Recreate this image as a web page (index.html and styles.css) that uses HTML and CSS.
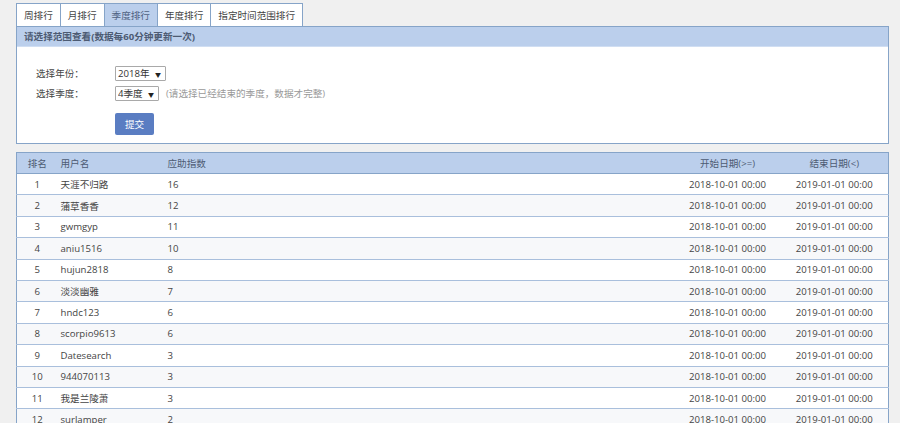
FILE: index.html
```html
<!DOCTYPE html>
<html lang="zh-CN">
<head>
    <meta charset="UTF-8">
    <title>季度排行</title>
    <link rel="stylesheet" href="styles.css">
</head>
<body>
    <ul class="tabs">
        <li class="tab">周排行</li>
        <li class="tab">月排行</li>
        <li class="tab active">季度排行</li>
        <li class="tab">年度排行</li>
        <li class="tab">指定时间范围排行</li>
    </ul>

    <div class="panel">
        <div class="panel-title">请选择范围查看(数据每60分钟更新一次)</div>
        <form class="range-form">
            <div class="form-row">
                <label class="form-label">选择年份：</label>
                <span class="select-wrap">
                    <select class="select">
                        <option>2018年</option>
                    </select>
                </span>
            </div>
            <div class="form-row">
                <label class="form-label">选择季度：</label>
                <span class="select-wrap">
                    <select class="select">
                        <option>4季度</option>
                    </select>
                </span>
                <span class="hint">(请选择已经结束的季度，数据才完整)</span>
            </div>
            <div class="form-row">
                <span class="form-label"></span>
                <button type="submit" class="btn">提交</button>
            </div>
        </form>
    </div>

    <table class="rank-table">
        <colgroup>
            <col class="c-rank">
            <col class="c-user">
            <col>
            <col class="c-start">
            <col class="c-end">
        </colgroup>
        <thead>
            <tr>
                <th class="center">排名</th>
                <th>用户名</th>
                <th>应助指数</th>
                <th class="center">开始日期(>=)</th>
                <th class="center">结束日期(<)</th>
            </tr>
        </thead>
        <tbody>
            <tr><td class="center">1</td><td>天涯不归路</td><td>16</td><td class="center">2018-10-01 00:00</td><td class="center">2019-01-01 00:00</td></tr>
            <tr><td class="center">2</td><td>蒲草香香</td><td>12</td><td class="center">2018-10-01 00:00</td><td class="center">2019-01-01 00:00</td></tr>
            <tr><td class="center">3</td><td>gwmgyp</td><td>11</td><td class="center">2018-10-01 00:00</td><td class="center">2019-01-01 00:00</td></tr>
            <tr><td class="center">4</td><td>aniu1516</td><td>10</td><td class="center">2018-10-01 00:00</td><td class="center">2019-01-01 00:00</td></tr>
            <tr><td class="center">5</td><td>hujun2818</td><td>8</td><td class="center">2018-10-01 00:00</td><td class="center">2019-01-01 00:00</td></tr>
            <tr><td class="center">6</td><td>淡淡幽雅</td><td>7</td><td class="center">2018-10-01 00:00</td><td class="center">2019-01-01 00:00</td></tr>
            <tr><td class="center">7</td><td>hndc123</td><td>6</td><td class="center">2018-10-01 00:00</td><td class="center">2019-01-01 00:00</td></tr>
            <tr><td class="center">8</td><td>scorpio9613</td><td>6</td><td class="center">2018-10-01 00:00</td><td class="center">2019-01-01 00:00</td></tr>
            <tr><td class="center">9</td><td>Datesearch</td><td>3</td><td class="center">2018-10-01 00:00</td><td class="center">2019-01-01 00:00</td></tr>
            <tr><td class="center">10</td><td>944070113</td><td>3</td><td class="center">2018-10-01 00:00</td><td class="center">2019-01-01 00:00</td></tr>
            <tr><td class="center">11</td><td>我是兰陵萧</td><td>3</td><td class="center">2018-10-01 00:00</td><td class="center">2019-01-01 00:00</td></tr>
            <tr><td class="center">12</td><td>surlamper</td><td>2</td><td class="center">2018-10-01 00:00</td><td class="center">2019-01-01 00:00</td></tr>
        </tbody>
    </table>
</body>
</html>
```

FILE: styles.css
```css
:root {
    --page-bg: #f0f0f0;
    --bar-bg: #bbcfec;
    --border: #86a4c8;
    --row-line: #a9bfdc;
    --text: #444;
    --head-text: #4d5b73;
}

* {
    box-sizing: border-box;
    margin: 0;
    padding: 0;
}

body {
    background-color: var(--page-bg);
    padding: 3px 11px 0 16px;
    font-family: "Open Sans", "Noto Sans CJK SC", sans-serif;
    font-size: 9.6px;
    color: var(--text);
}

/* tabs */
.tabs {
    list-style: none;
    display: flex;
    height: 23px;
}

.tab {
    display: flex;
    align-items: center;
    padding: 0 7px;
    border: 1px solid var(--border);
    border-bottom: none;
    border-left: none;
    background-color: #fff;
    color: #444;
}

.tab:first-child {
    border-left: 1px solid var(--border);
}

.tab.active {
    background-color: var(--bar-bg);
    color: #4f6282;
}

/* search panel */
.panel {
    background-color: #fff;
    border: 1px solid var(--border);
    height: 118px;
}

.panel-title {
    background-color: var(--bar-bg);
    height: 20px;
    line-height: 20px;
    padding-left: 7px;
    font-weight: 700;
    color: #4d5b73;
    border-bottom: 1px solid #d0def2;
}

.range-form {
    padding: 16px 0 0 19px;
}

.form-row {
    display: flex;
    align-items: center;
    height: 20px;
}

.form-label {
    width: 79px;
    color: #444;
}

.select-wrap {
    position: relative;
    display: inline-block;
}

.select-wrap::after {
    content: "▼";
    position: absolute;
    right: 5px;
    top: 4px;
    font-size: 6px;
    color: #222;
    pointer-events: none;
}

.select {
    appearance: none;
    -webkit-appearance: none;
    font: inherit;
    color: #333;
    background: #fff;
    border: 1px solid #a9a9a9;
    border-radius: 1px;
    height: 15px;
    padding: 0 15px 0 2px;
}

.hint {
    margin-left: 7px;
    color: #999;
}

.btn {
    margin-top: 21px;
    width: 39px;
    height: 22px;
    border: none;
    border-radius: 2px;
    background-color: #5a7dc2;
    color: #fff;
    font: inherit;
    cursor: pointer;
}

/* ranking table */
.rank-table {
    margin-top: 8px;
    width: 100%;
    table-layout: fixed;
    border-collapse: collapse;
    border: 1px solid var(--border);
    background-color: #fff;
}

.c-rank { width: 41px; }
.c-user { width: 107px; }
.c-start { width: 106px; }
.c-end { width: 108px; }

.rank-table th {
    background-color: var(--bar-bg);
    color: var(--head-text);
    font-weight: 400;
    text-align: left;
    height: 21px;
    padding: 0 3px;
    border-bottom: 1px solid var(--border);
}

.rank-table td {
    height: 21.4px;
    padding: 0 3px;
    border-bottom: 1px solid var(--row-line);
    white-space: nowrap;
}

.rank-table tbody tr:nth-child(even) {
    background-color: #f7f8fa;
}

.rank-table .center {
    text-align: center;
}
```
